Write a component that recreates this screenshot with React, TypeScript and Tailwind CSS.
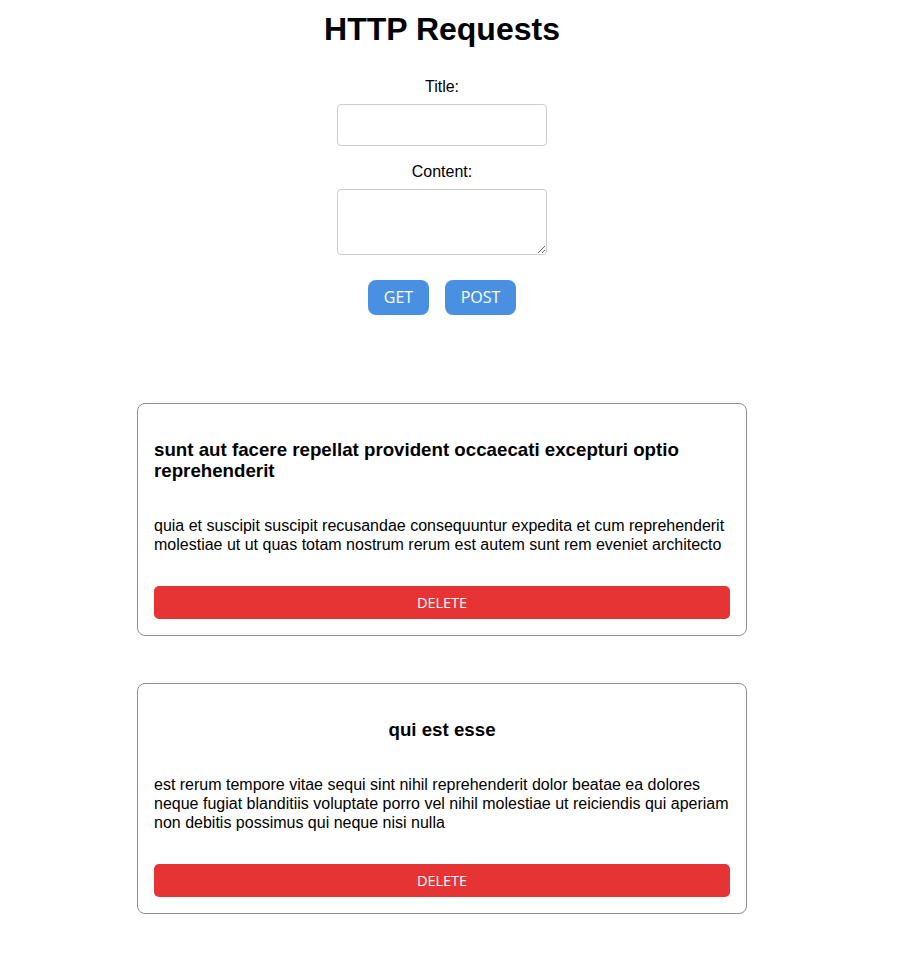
import React from 'react';

interface Post {
    id: number;
    title: string;
    body: string;
}

const posts: Post[] = [
    {
        id: 1,
        title: 'sunt aut facere repellat provident occaecati excepturi optio reprehenderit',
        body: 'quia et suscipit suscipit recusandae consequuntur expedita et cum reprehenderit molestiae ut ut quas totam nostrum rerum est autem sunt rem eveniet architecto',
    },
    {
        id: 2,
        title: 'qui est esse',
        body: 'est rerum tempore vitae sequi sint nihil reprehenderit dolor beatae ea dolores neque fugiat blanditiis voluptate porro vel nihil molestiae ut reiciendis qui aperiam non debitis possimus qui neque nisi nulla',
    },
];

const PostCard: React.FC<{ post: Post }> = ({ post }) => {
    return (
        <div className="w-[610px] mx-auto border border-[#8f8f8f] rounded-lg p-4 flex flex-col">
            <h3 className="flex justify-center text-[18.72px] leading-[21.5px] font-bold my-[18.72px]">
                {post.title}
            </h3>
            <p className="text-base leading-[19px] my-4">{post.body}</p>
            <button className="mt-4 h-[33px] w-full rounded-[5px] bg-[#e63434] text-white text-[14.5px] font-['Open_Sans',sans-serif]">
                DELETE
            </button>
        </div>
    );
};

export default function App() {
    return (
        <div className="w-[884px] pb-[45px] text-black bg-white font-['Liberation_Sans',Arial,sans-serif]">
            <h1 className="pt-[11px] text-[32px] leading-[37px] font-bold text-center">HTTP Requests</h1>

            <div className="flex flex-col items-center">
                <label className="mt-[30px] text-base leading-[18.4px]">Title:</label>
                <input
                    type="text"
                    className="mt-2 w-[210px] h-[42px] border border-[#cccccc] rounded px-2 outline-none"
                />
                <label className="mt-[17px] text-base leading-[18.4px]">Content:</label>
                <textarea className="mt-[7px] w-[210px] h-[66px] border border-[#cccccc] rounded px-2 outline-none resize" />

                <div className="mt-[25px] flex gap-4">
                    <button className="w-[61px] h-[35px] rounded-lg bg-[#4a90e2] text-white text-base font-['Open_Sans',sans-serif]">
                        GET
                    </button>
                    <button className="w-[71px] h-[35px] rounded-lg bg-[#4a90e2] text-white text-base font-['Open_Sans',sans-serif]">
                        POST
                    </button>
                </div>
            </div>

            <div className="mt-[88px] flex flex-col gap-[47px]">
                {posts.map((post) => (
                    <PostCard key={post.id} post={post} />
                ))}
            </div>
        </div>
    );
}
